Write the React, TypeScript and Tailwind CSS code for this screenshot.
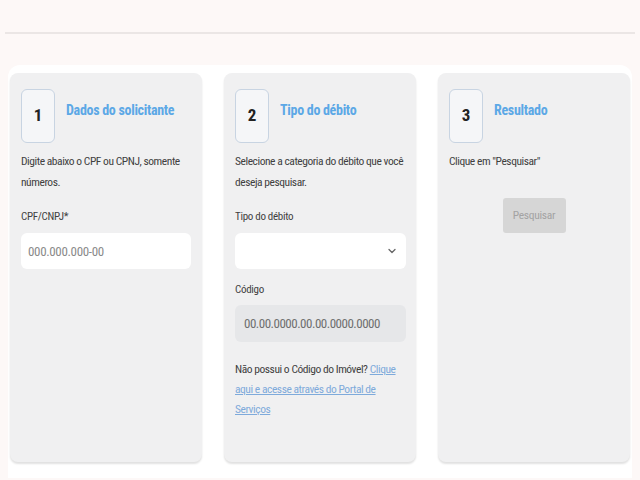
import React from "react";

const roboto = { fontFamily: "Roboto, 'Liberation Sans', sans-serif", fontStretch: "75%" };

const StepHeader = ({ n, title }: { n: number; title: string }) => (
  <div className="flex items-start gap-[11px]">
    <div className="flex h-[54px] w-[34px] items-center justify-center rounded-md border border-[#c8d4e2] bg-[#f5f6f8] text-[17px] font-bold text-[#222]">
      {n}
    </div>
    <h2 className="mt-[12px] text-[14px] font-bold leading-[18px] tracking-[-0.3px] text-[#5ca8e6]">{title}</h2>
  </div>
);

const App: React.FC = () => {
  return (
    <div className="min-h-screen bg-[#fdf8f7] pt-8" style={roboto}>
      <div className="mx-[5px] h-[2px] bg-[#ebe6e5]" />

      <div className="mx-2 mt-[31px] flex gap-[22px] rounded-t-xl bg-white px-[2px] pt-2 pb-4">
        {/* Passo 1 */}
        <div className="h-[389px] w-[192px] rounded-lg bg-[#f0f0f1] px-[11px] pt-4 shadow-[0_2px_2px_rgba(0,0,0,0.12)]">
          <StepHeader n={1} title="Dados do solicitante" />
          <p className="mt-2 whitespace-nowrap text-[11.5px] leading-[21px] tracking-[-0.45px] text-[#3f3f3f]">
            Digite abaixo o CPF ou CPNJ, somente
            <br />
            números.
          </p>
          <label className="mt-[16px] block text-[11px] leading-4 tracking-[-0.3px] text-[#3f3f3f]">CPF/CNPJ*</label>
          <input
            style={roboto}
            className="mt-2 h-9 w-[170px] rounded-md bg-white px-[7px] text-[13px] tracking-[-0.35px] text-[#555] outline-none placeholder:text-[#8a8a8a]"
            placeholder="000.000.000-00"
          />
        </div>

        {/* Passo 2 */}
        <div className="h-[389px] w-[192px] rounded-lg bg-[#f0f0f1] px-[11px] pt-4 shadow-[0_2px_2px_rgba(0,0,0,0.12)]">
          <StepHeader n={2} title="Tipo do débito" />
          <p className="mt-2 whitespace-nowrap text-[11.5px] leading-[21px] tracking-[-0.45px] text-[#3f3f3f]">
            Selecione a categoria do débito que você
            <br />
            deseja pesquisar.
          </p>
          <label className="mt-[16px] block text-[11px] leading-4 tracking-[-0.3px] text-[#3f3f3f]">Tipo do débito</label>
          <div className="mt-2 flex h-9 w-[171px] items-center justify-end rounded-md bg-white pr-[10px]">
            <svg width="8" height="6" viewBox="0 0 8 6" fill="none">
              <path d="M1 1.5L4 4.5L7 1.5" stroke="#666" strokeWidth="1.3" strokeLinecap="round" strokeLinejoin="round" />
            </svg>
          </div>
          <label className="mt-[13px] block text-[11px] leading-4 tracking-[-0.3px] text-[#3f3f3f]">Código</label>
          <div className="mt-[7px] flex h-[37px] w-[171px] items-center rounded-md bg-[#e6e7e9] pl-[9px] text-[13px] tracking-[-0.5px] text-[#6f6f6f]">
            00.00.0000.00.00.0000.0000
          </div>
          <p className="mt-[17px] whitespace-nowrap text-[11.5px] leading-[20px] tracking-[-0.45px] text-[#3f3f3f]">
            Não possui o Código do Imóvel?{" "}
            <a href="#" className="text-[#7eaadb] underline">
              Clique
              <br />
              aqui e acesse através do Portal de
              <br />
              Serviços
            </a>
          </p>
        </div>

        {/* Passo 3 */}
        <div className="h-[389px] w-[192px] rounded-lg bg-[#f0f0f1] px-[11px] pt-4 shadow-[0_2px_2px_rgba(0,0,0,0.12)]">
          <StepHeader n={3} title="Resultado" />
          <p className="mt-2 text-[11.5px] leading-[21px] tracking-[-0.45px] text-[#3f3f3f]">Clique em "Pesquisar"</p>
          <div className="mt-[26px] flex justify-center">
            <button
              disabled
              style={roboto}
              className="h-[35px] w-[63px] rounded-[3px] bg-[#d6d6d6] text-[11.5px] tracking-[-0.3px] text-[#a3a3a3]"
            >
              Pesquisar
            </button>
          </div>
        </div>
      </div>
    </div>
  );
};

export default App;
